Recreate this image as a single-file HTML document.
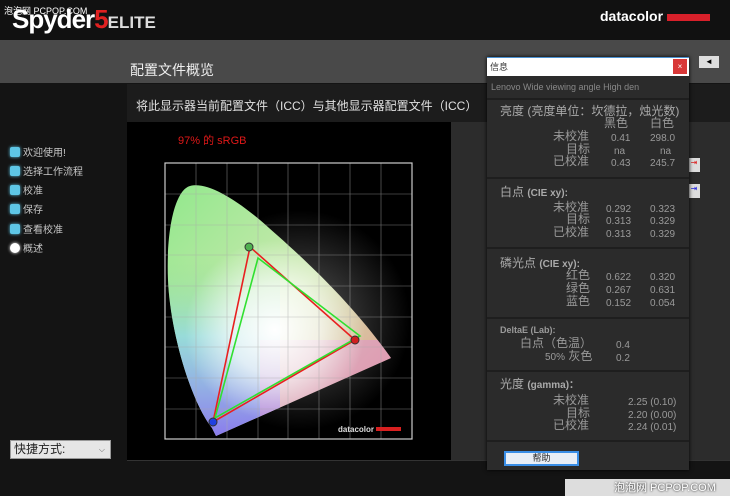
<!DOCTYPE html>
<html><head><meta charset="utf-8"><style>
*{margin:0;padding:0;box-sizing:border-box}
body{width:730px;height:496px;background:#141414;font-family:"Liberation Sans","Noto Sans CJK SC",sans-serif;position:relative;overflow:hidden;color:#ccc}
.a{position:absolute}
.side div{position:absolute;left:10px;font-size:10px;color:#c8c8c8;height:12px;line-height:11px}
.side i{display:inline-block;width:10px;height:10px;background:#5ec6e6;border-radius:2px;box-shadow:0 0 3px #5ec6e6;vertical-align:-1px;margin-right:3px}
.dlg div{position:absolute;font-size:12px;line-height:13px;color:#9a9a9a;white-space:nowrap}
.dlg .n{font-size:10px}
.h{color:#aaa!important;font-size:12px!important}
.sep{position:absolute;left:0;width:202px;height:2px;background:#1e1e1e}
</style></head><body>
<div class="a" style="left:0;top:0;width:730px;height:40px;background:#111"></div>
<div class="a" style="left:12px;top:4px;font-size:26px;font-weight:bold;color:#fff;letter-spacing:-1px">Spyder<span style="color:#e02020">5</span><span style="font-size:17px;color:#ddd;letter-spacing:0">ELITE</span></div>
<div class="a" style="left:4px;top:4px;font-size:9px;color:#fff">泡泡网 PCPOP.COM</div>
<div class="a" style="left:600px;top:8px;font-size:14px;font-weight:bold;color:#fff">datacolor</div>
<div class="a" style="left:667px;top:14px;width:43px;height:7px;background:#d8202a"></div>
<div class="a" style="left:0;top:40px;width:730px;height:43px;background:#494949"></div>
<div class="a" style="left:130px;top:60px;font-size:14px;color:#eee">配置文件概览</div>
<div class="a" style="left:699px;top:56px;width:20px;height:12px;background:#ddd;font-size:8px;color:#000;text-align:center;line-height:12px">◄</div>
<div class="a" style="left:127px;top:84px;width:603px;height:38px;background:#1c1c1c"></div>
<div class="a" style="left:136px;top:97px;font-size:12px;color:#e0e0e0">将此显示器当前配置文件（ICC）与其他显示器配置文件（ICC）</div>
<div class="a" style="left:127px;top:122px;width:324px;height:338px;background:#000"></div>
<div class="a" style="left:451px;top:122px;width:279px;height:338px;background:#2c2c2c"></div>
<div class="a" style="left:127px;top:460px;width:603px;height:1px;background:#333"></div>
<div class="a" style="left:178px;top:132px;font-size:11px;color:#e01818">97% 的 sRGB</div>
<svg class="a" style="left:0;top:0" width="730" height="496">
<defs>
<radialGradient id="w" cx="0.5" cy="0.5" r="0.5"><stop offset="0" stop-color="#fff"/><stop offset="0.5" stop-color="#fff" stop-opacity=".7"/><stop offset="1" stop-color="#fff" stop-opacity="0"/></radialGradient>
<radialGradient id="w2" cx="0.5" cy="0.5" r="0.5"><stop offset="0" stop-color="#fff" stop-opacity=".35"/><stop offset="1" stop-color="#fff" stop-opacity="0"/></radialGradient>
<linearGradient id="g1" x1="0" y1="0" x2="1" y2="1"><stop offset="0" stop-color="#8ee88a"/><stop offset="0.5" stop-color="#cde8b0"/><stop offset="1" stop-color="#e88888"/></linearGradient>
<linearGradient id="g2" x1="0" y1="0" x2="0" y2="1"><stop offset="0.3" stop-color="#8be08a" stop-opacity="0"/><stop offset="0.6" stop-color="#8fd8e6" stop-opacity=".8"/><stop offset="1" stop-color="#8a78ee"/></linearGradient>
<clipPath id="c"><path d="M216,436 L212,428 C190,400 170,330 168,280 C166,230 175,190 190,186 C205,182 230,195 260,220 C300,255 350,300 391,358 Z"/></clipPath>
</defs>
<circle cx="300" cy="320" r="110" fill="url(#w2)"/>
<g clip-path="url(#c)">
<rect x="160" y="180" width="240" height="260" fill="url(#g1)"/>
<rect x="160" y="180" width="120" height="260" fill="url(#g2)"/>
<rect x="260" y="340" width="140" height="100" fill="#e090d0" opacity=".5"/>
<circle cx="275" cy="330" r="90" fill="url(#w)"/>
</g>
<g stroke="#aaa" stroke-width="0.6" fill="none" opacity=".7">
<path d="M196,163V439M227,163V439M258,163V439M288,163V439M319,163V439M350,163V439M381,163V439M165,194H412M165,225H412M165,255H412M165,286H412M165,317H412M165,347H412M165,378H412M165,409H412"/>
</g>
<rect x="165" y="163" width="247" height="276" fill="none" stroke="#ccc" stroke-width="1.2"/>
<polygon points="250,247 355,340 213,422" fill="none" stroke="#e82020" stroke-width="1.6"/>
<polygon points="258,258 360,336 215,418" fill="none" stroke="#30e030" stroke-width="1.6"/>
<circle cx="249" cy="247" r="4" fill="#50b050" stroke="#333"/>
<circle cx="355" cy="340" r="4" fill="#d02020" stroke="#333"/>
<circle cx="213" cy="422" r="4" fill="#2040e0" stroke="#333"/>
<text x="338" y="432" font-size="8" font-weight="bold" fill="#ddd" font-family="Liberation Sans">datacolor</text>
<rect x="376" y="427" width="25" height="4" fill="#d82020"/>
</svg>
<div class="side">
<div style="top:147px"><i></i>欢迎使用!</div>
<div style="top:166px"><i></i>选择工作流程</div>
<div style="top:185px"><i></i>校准</div>
<div style="top:204px"><i></i>保存</div>
<div style="top:224px"><i></i>查看校准</div>
<div style="top:243px"><i style="background:#fff;border-radius:5px;box-shadow:0 0 3px #fff"></i>概述</div>
</div>
<div class="a" style="left:10px;top:440px;width:101px;height:19px;background:#e6e6e6;border:1px solid #999;font-size:12px;color:#222;padding-left:3px;line-height:17px">快捷方式:<span style="position:absolute;right:5px;font-size:8px;color:#666">⌵</span></div>
<div class="a" style="left:688px;top:158px;width:12px;height:14px;background:#ddd;font-size:8px;color:#d22;text-align:center">⇥</div>
<div class="a" style="left:688px;top:184px;width:12px;height:14px;background:#ddd;font-size:8px;color:#22d;text-align:center">⇥</div>
<div class="a" style="left:565px;top:479px;width:165px;height:17px;background:#ddd"></div>
<div class="a dlg" style="left:487px;top:57px;width:202px;height:413px;background:#2b2b2b;box-shadow:0 0 4px #000">
<div style="left:0;top:0;width:202px;height:19px;background:#fff;border-top:1px solid #4a90d0"></div>
<div style="left:3px;top:4px;font-size:9px;color:#333">信息</div>
<div style="left:186px;top:2px;width:14px;height:15px;background:#d83838;color:#fff;font-size:8px;text-align:center;line-height:15px">×</div>
<div style="left:4px;top:24px;font-size:9px;color:#888">Lenovo Wide viewing angle  High den</div>
<div class="sep" style="top:41px"></div>
<div class="h" style="left:13px;top:48px">亮度 (亮度单位：坎德拉，烛光数)</div>
<div style="left:117px;top:60px">黑色</div><div style="left:163px;top:60px">白色</div>
<div style="left:66px;top:73px">未校准</div><div class="n" style="left:124px;top:75px">0.41</div><div class="n" style="left:163px;top:75px">298.0</div>
<div style="left:79px;top:86px">目标</div><div class="n" style="left:127px;top:88px">na</div><div class="n" style="left:173px;top:88px">na</div>
<div style="left:66px;top:98px">已校准</div><div class="n" style="left:124px;top:100px">0.43</div><div class="n" style="left:163px;top:100px">245.7</div>
<div class="sep" style="top:120px"></div>
<div class="h" style="left:13px;top:129px">白点 <b style="font-size:10px">(CIE xy):</b></div>
<div style="left:66px;top:144px">未校准</div><div class="n" style="left:119px;top:146px">0.292</div><div class="n" style="left:163px;top:146px">0.323</div>
<div style="left:79px;top:156px">目标</div><div class="n" style="left:119px;top:158px">0.313</div><div class="n" style="left:163px;top:158px">0.329</div>
<div style="left:66px;top:169px">已校准</div><div class="n" style="left:119px;top:171px">0.313</div><div class="n" style="left:163px;top:171px">0.329</div>
<div class="sep" style="top:190px"></div>
<div class="h" style="left:13px;top:200px">磷光点 <b style="font-size:10px">(CIE xy):</b></div>
<div style="left:79px;top:212px">红色</div><div class="n" style="left:119px;top:214px">0.622</div><div class="n" style="left:163px;top:214px">0.320</div>
<div style="left:79px;top:225px">绿色</div><div class="n" style="left:119px;top:227px">0.267</div><div class="n" style="left:163px;top:227px">0.631</div>
<div style="left:79px;top:238px">蓝色</div><div class="n" style="left:119px;top:240px">0.152</div><div class="n" style="left:163px;top:240px">0.054</div>
<div class="sep" style="top:260px"></div>
<div style="left:13px;top:267px;font-size:9px;font-weight:bold">DeltaE (Lab):</div>
<div style="left:33px;top:280px">白点（色温）</div><div class="n" style="left:129px;top:282px">0.4</div>
<div style="left:58px;top:293px"><span style="font-size:10px">50%</span> 灰色</div><div class="n" style="left:129px;top:295px">0.2</div>
<div class="sep" style="top:313px"></div>
<div class="h" style="left:13px;top:321px">光度 <b style="font-size:10px">(gamma)：</b></div>
<div style="left:66px;top:337px">未校准</div><div class="n" style="left:141px;top:339px">2.25 (0.10)</div>
<div style="left:79px;top:350px">目标</div><div class="n" style="left:141px;top:352px">2.20 (0.00)</div>
<div style="left:66px;top:362px">已校准</div><div class="n" style="left:141px;top:364px">2.24 (0.01)</div>
<div class="sep" style="top:383px"></div>
<div style="left:17px;top:394px;width:75px;height:15px;background:#e8eef6;border:2px solid #3a8ee6;color:#222;font-size:9px;text-align:center;line-height:11px">帮助</div>
</div>
<div class="a" style="left:614px;top:479px;font-size:11px;color:#fff;text-shadow:0 0 2px #000">泡泡网 PCPOP.COM</div>
</body></html>
